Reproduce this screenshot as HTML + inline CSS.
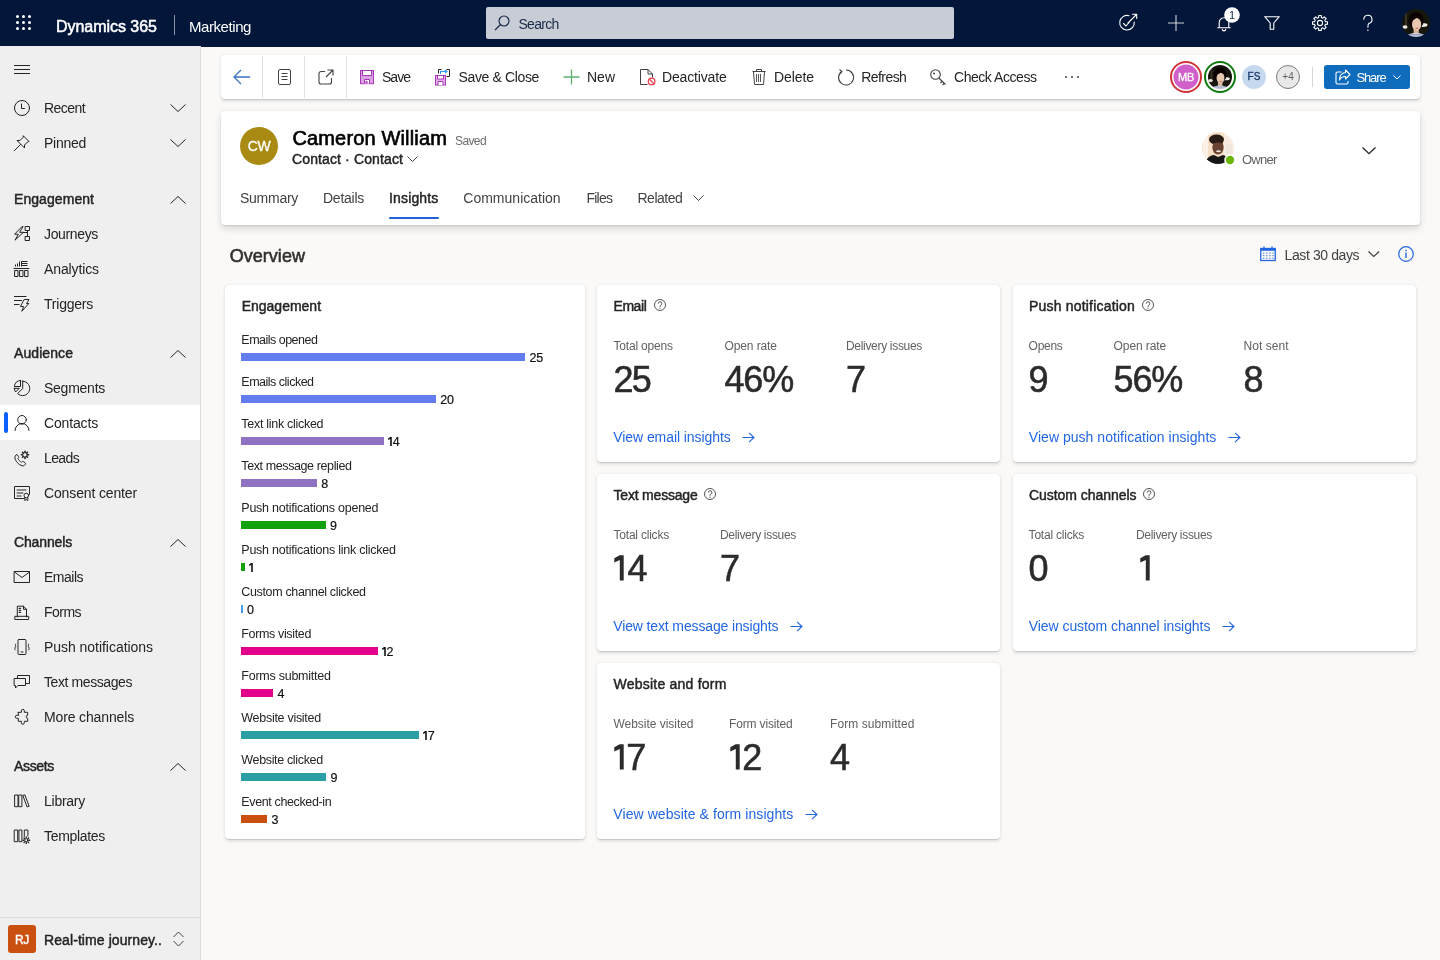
<!DOCTYPE html><html><head><meta charset="utf-8"><title>Dynamics 365 Marketing</title><style>
html,body{margin:0;padding:0;}
body{width:1440px;height:960px;overflow:hidden;position:relative;background:#FAF9F8;font-family:"Liberation Sans",sans-serif;}
.a{position:absolute;}
.t{position:absolute;white-space:nowrap;}
svg.a{overflow:visible;}
.card{position:absolute;background:#fff;border-radius:4px;box-shadow:0 1.6px 3.6px rgba(0,0,0,.13),0 0.3px 0.9px rgba(0,0,0,.11);}
</style></head><body><div style="position:absolute;left:0;top:0;width:1440px;height:960px;will-change:transform;">

<div class="a" style="left:0px;top:0px;width:1440px;height:46.6px;background:#011638;"></div>
<svg class="a" style="left:0px;top:0px;" width="40" height="40" viewBox="0 0 40 40"><circle cx="17.5" cy="16.5" r="1.5" fill="#fff"/><circle cx="17.5" cy="22.5" r="1.5" fill="#fff"/><circle cx="17.5" cy="28.5" r="1.5" fill="#fff"/><circle cx="23.5" cy="16.5" r="1.5" fill="#fff"/><circle cx="23.5" cy="22.5" r="1.5" fill="#fff"/><circle cx="23.5" cy="28.5" r="1.5" fill="#fff"/><circle cx="29.5" cy="16.5" r="1.5" fill="#fff"/><circle cx="29.5" cy="22.5" r="1.5" fill="#fff"/><circle cx="29.5" cy="28.5" r="1.5" fill="#fff"/></svg>
<div class="t" style="left:56.00px;top:15.71px;font-size:16px;line-height:21px;color:#fff;-webkit-text-stroke:0.51px #fff;letter-spacing:-0.036px;">Dynamics 365</div>
<div class="a" style="left:174px;top:15px;width:1px;height:20px;background:#8a93a6;"></div>
<div class="t" style="left:189.00px;top:16.54px;font-size:15px;line-height:20px;color:#fff;letter-spacing:-0.431px;">Marketing</div>
<div class="a" style="left:486px;top:7px;width:468px;height:32px;background:#C8CDD5;border-radius:2px;"></div>
<svg class="a" style="left:494px;top:15px;" width="16" height="16" viewBox="0 0 16 16"><circle cx="10" cy="6" r="5" fill="none" stroke="#1b2a4a" stroke-width="1.2"/><line x1="6.5" y1="9.5" x2="1" y2="15" stroke="#1b2a4a" stroke-width="1.2"/></svg>
<div class="t" style="left:518.50px;top:15.17px;font-size:14px;line-height:18px;color:#1b2a4a;letter-spacing:-0.724px;">Search</div>
<svg class="a" style="left:1118px;top:13px;" width="20" height="20" viewBox="0 0 20 20"><path d="M16.3 9A7.3 7.3 0 1 1 11 2.7" stroke="#fff" stroke-width="1.1" fill="none" stroke-linecap="round" stroke-linejoin="round"/><path d="M10 10L18.5 1.5M14.5 1.3H18.7V5.5" stroke="#fff" stroke-width="1.1" fill="none" stroke-linecap="round" stroke-linejoin="round"/><path d="M5.5 10.5L8 13L11 9.5" stroke="#fff" stroke-width="1.1" fill="none" stroke-linecap="round" stroke-linejoin="round"/></svg>
<svg class="a" style="left:1168px;top:15px;" width="16" height="16" viewBox="0 0 16 16"><path d="M8 0V16M0 8H16" stroke="#cfd3da" stroke-width="1.1"/></svg>
<svg class="a" style="left:1217px;top:15px;" width="14" height="16" viewBox="0 0 14 16"><path d="M2.2 12.8V7.5A4.8 4.8 0 0 1 11.8 7.5V12.8H13.3H0.7Z" stroke="#fff" stroke-width="1.1" fill="none" stroke-linecap="round" stroke-linejoin="round"/><path d="M5.3 14.2A1.7 1.7 0 0 0 8.7 14.2" stroke="#fff" stroke-width="1.1" fill="none" stroke-linecap="round" stroke-linejoin="round"/></svg>
<svg class="a" style="left:1224px;top:7px;" width="16" height="16" viewBox="0 0 16 16"><circle cx="8" cy="8" r="7.8" fill="#fff"/></svg>
<div class="t" style="left:1224.00px;top:7.86px;font-size:11px;line-height:14px;color:#0b1f44;width:16px;text-align:center;">1</div>
<svg class="a" style="left:1264px;top:16px;" width="16" height="14" viewBox="0 0 16 14"><path d="M0.7 0.7H15.3L9.8 7V13.3H6.2V7Z" stroke="#fff" stroke-width="1.1" fill="none" stroke-linecap="round" stroke-linejoin="round"/></svg>
<svg class="a" style="left:1312px;top:15px;" width="16" height="16" viewBox="0 0 16 16"><path d="M13.44 6.67 L15.49 6.71 L15.49 9.29 L13.44 9.33 L12.79 10.91 L14.21 12.39 L12.39 14.21 L10.91 12.79 L9.33 13.44 L9.29 15.49 L6.71 15.49 L6.67 13.44 L5.09 12.79 L3.61 14.21 L1.79 12.39 L3.21 10.91 L2.56 9.33 L0.51 9.29 L0.51 6.71 L2.56 6.67 L3.21 5.09 L1.79 3.61 L3.61 1.79 L5.09 3.21 L6.67 2.56 L6.71 0.51 L9.29 0.51 L9.33 2.56 L10.91 3.21 L12.39 1.79 L14.21 3.61 L12.79 5.09Z" stroke="#fff" stroke-width="1.1" fill="none" stroke-linecap="round" stroke-linejoin="round"/><circle cx="8" cy="8" r="2.6" stroke="#fff" stroke-width="1.1" fill="none" stroke-linecap="round" stroke-linejoin="round"/></svg>
<svg class="a" style="left:1363px;top:15px;" width="10" height="17" viewBox="0 0 10 17"><path d="M0.8 4.3A4.1 4.1 0 1 1 5.8 8.4C5.1 9 4.9 9.8 4.9 12.3" stroke="#fff" stroke-width="1.1" fill="none" stroke-linecap="round" stroke-linejoin="round"/><circle cx="4.9" cy="15.3" r=".75" fill="#fff"/></svg>
<svg class="a" style="left:1402px;top:9px;" width="28" height="28" viewBox="0 0 28 28"><defs><clipPath id="cp0"><circle cx="14" cy="14" r="14"/></clipPath><filter id="bl" x="-10%" y="-10%" width="120%" height="120%"><feGaussianBlur stdDeviation="0.35"/></filter></defs><g clip-path="url(#cp0)"><g filter="url(#bl)"><rect width="28" height="28" fill="#16120e"/><rect x="3" y="4" width="2" height="16" fill="#3a3328"/><ellipse cx="3" cy="18" rx="2.6" ry="1.8" fill="#e9e5dd"/><ellipse cx="20.5" cy="16" rx="5" ry="1.9" fill="#f1eee8"/><ellipse cx="14.2" cy="11.5" rx="7.6" ry="8.6" fill="#080605"/><rect x="11.6" y="19" width="5.2" height="6" fill="#d9b297"/><ellipse cx="14.6" cy="15.3" rx="4.6" ry="6.2" fill="#e8c7b0"/><path d="M8.5 12C9 7 12 5 16 5.5C19 6 21 8.5 20.5 12C19 9.5 16 8.5 13.5 9.5C12 10.5 10.5 11.5 8.5 12Z" fill="#080605"/><ellipse cx="14.8" cy="19.2" rx="1.7" ry=".7" fill="#c27868"/><ellipse cx="14" cy="28.5" rx="10" ry="4.5" fill="#d8dbe3"/><path d="M6 25.5H22M7 27H21" stroke="#6b7fb0" stroke-width=".6"/></g></g></svg>
<div class="a" style="left:0px;top:46px;width:200px;height:914px;background:#EFEFEF;"></div>
<div class="a" style="left:200px;top:46px;width:1px;height:914px;background:#DCDCDC;"></div>
<svg class="a" style="left:14px;top:60px;" width="16" height="16" viewBox="0 0 16 16"><path d="M0 5.5H16M0 9.5H16M0 13.5H16" stroke="#242424" stroke-width="1"/></svg>
<svg class="a" style="left:14px;top:100px;" width="16" height="16" viewBox="0 0 16 16"><circle cx="8" cy="8" r="7.5" stroke="#242424" stroke-width="1" fill="none" stroke-linecap="round" stroke-linejoin="round"/><path d="M7.5 4V8.5H10.5" stroke="#242424" stroke-width="1" fill="none" stroke-linecap="round" stroke-linejoin="round"/></svg>
<div class="t" style="left:44.00px;top:99.07px;font-size:14px;line-height:18px;color:#242424;letter-spacing:-0.557px;">Recent</div>
<svg class="a" style="left:170px;top:104px;" width="16" height="8" viewBox="0 0 16 8"><path d="M0.5 0.5L8.0 7.5L15.5 0.5" stroke="#242424" stroke-width="1" fill="none"/></svg>
<svg class="a" style="left:14px;top:135px;" width="16" height="16" viewBox="0 0 16 16"><path d="M9.5 1L15 6.5L13.5 7L10.5 10L10.5 13L3 5.5L6 5.5L9 2.5Z" stroke="#242424" stroke-width="1" fill="none" stroke-linecap="round" stroke-linejoin="round"/><path d="M6.5 9.5L0.5 15.5" stroke="#242424" stroke-width="1" fill="none" stroke-linecap="round" stroke-linejoin="round"/></svg>
<div class="t" style="left:44.00px;top:134.07px;font-size:14px;line-height:18px;color:#242424;letter-spacing:-0.263px;">Pinned</div>
<svg class="a" style="left:170px;top:139px;" width="16" height="8" viewBox="0 0 16 8"><path d="M0.5 0.5L8.0 7.5L15.5 0.5" stroke="#242424" stroke-width="1" fill="none"/></svg>
<div class="t" style="left:14.00px;top:190.17px;font-size:14px;line-height:18px;color:#242424;-webkit-text-stroke:0.45px #242424;letter-spacing:0.064px;">Engagement</div>
<svg class="a" style="left:170px;top:195.5px;" width="16" height="8" viewBox="0 0 16 8"><path d="M0.5 7.5L8.0 0.5L15.5 7.5" stroke="#242424" stroke-width="1" fill="none"/></svg>
<svg class="a" style="left:14px;top:226px;" width="16" height="16" viewBox="0 0 16 16"><path d="M7.8 0.8L0.6 8.2H4.3L1 14.2L9.4 6.3H5.6L8.9 0.8Z" stroke="#242424" stroke-width="1" fill="none" stroke-linecap="round" stroke-linejoin="round"/><rect x="11.5" y="0.5" width="4" height="4" stroke="#242424" stroke-width="1" fill="none" stroke-linecap="round" stroke-linejoin="round"/><rect x="11.5" y="10.5" width="4" height="4" stroke="#242424" stroke-width="1" fill="none" stroke-linecap="round" stroke-linejoin="round"/><path d="M13.5 4.5V10.5M9.5 6.5H13.5" stroke="#242424" stroke-width="1" fill="none" stroke-linecap="round" stroke-linejoin="round"/></svg>
<div class="t" style="left:44.00px;top:225.07px;font-size:14px;line-height:18px;color:#242424;letter-spacing:-0.348px;">Journeys</div>
<svg class="a" style="left:14px;top:261px;" width="16" height="16" viewBox="0 0 16 16"><path d="M0 7.5H15" stroke="#242424" stroke-width="1" fill="none" stroke-linecap="round" stroke-linejoin="round"/><rect x="1" y="9.5" width="3" height="6" stroke="#242424" stroke-width="1" fill="none" stroke-linecap="round" stroke-linejoin="round"/><rect x="6" y="9.5" width="3" height="6" stroke="#242424" stroke-width="1" fill="none" stroke-linecap="round" stroke-linejoin="round"/><rect x="11" y="9.5" width="3" height="6" stroke="#242424" stroke-width="1" fill="none" stroke-linecap="round" stroke-linejoin="round"/><path d="M1.5 3.5V5.5M3.5 2.5V5.5M5.5 0.5V5.5M7.5 0.5V5.5M7.5 0.5H13.5M7.5 2.5H13.5M7.5 4.5H13.5" stroke="#242424" stroke-width="1" fill="none"/></svg>
<div class="t" style="left:44.00px;top:260.07px;font-size:14px;line-height:18px;color:#242424;letter-spacing:-0.113px;">Analytics</div>
<svg class="a" style="left:14px;top:296px;" width="16" height="16" viewBox="0 0 16 16"><path d="M0 0.5H12.5M0 4.5H8M0 8.5H5.5" stroke="#242424" stroke-width="1" fill="none"/><path d="M10.5 3.5H15L12.6 7.5H14.8L7.8 15.3L9.6 10.5H6.8Z" stroke="#242424" stroke-width="1" fill="none" stroke-linecap="round" stroke-linejoin="round"/></svg>
<div class="t" style="left:44.00px;top:295.07px;font-size:14px;line-height:18px;color:#242424;letter-spacing:-0.225px;">Triggers</div>
<div class="t" style="left:14.00px;top:344.17px;font-size:14px;line-height:18px;color:#242424;-webkit-text-stroke:0.45px #242424;letter-spacing:0.080px;">Audience</div>
<svg class="a" style="left:170px;top:349.5px;" width="16" height="8" viewBox="0 0 16 8"><path d="M0.5 7.5L8.0 0.5L15.5 7.5" stroke="#242424" stroke-width="1" fill="none"/></svg>
<svg class="a" style="left:14px;top:380px;" width="16" height="16" viewBox="0 0 16 16"><path d="M8.7 1.2V8.5L3.6 13.6A7.2 7.2 0 1 0 8.7 1.2Z" stroke="#242424" stroke-width="1" fill="none" stroke-linecap="round" stroke-linejoin="round"/><path d="M6.5 0.4V6.5H0.4A6.1 6.1 0 0 1 6.5 0.4Z" stroke="#242424" stroke-width="1" fill="none" stroke-linecap="round" stroke-linejoin="round"/><path d="M0.4 8.3H5.3L1.6 12A6.1 6.1 0 0 1 0.4 8.3Z" stroke="#242424" stroke-width="1" fill="none" stroke-linecap="round" stroke-linejoin="round"/></svg>
<div class="t" style="left:44.00px;top:379.07px;font-size:14px;line-height:18px;color:#242424;letter-spacing:-0.252px;">Segments</div>
<div class="a" style="left:0px;top:405px;width:200px;height:35px;background:#fff;"></div>
<div class="a" style="left:3.5px;top:412px;width:4px;height:21px;background:#0B5FFF;border-radius:2px;"></div>
<svg class="a" style="left:14px;top:415px;" width="16" height="16" viewBox="0 0 16 16"><circle cx="8" cy="4.8" r="4.3" stroke="#242424" stroke-width="1" fill="none" stroke-linecap="round" stroke-linejoin="round"/><path d="M1 15.5A7 7 0 0 1 15 15.5" stroke="#242424" stroke-width="1" fill="none" stroke-linecap="round" stroke-linejoin="round"/></svg>
<div class="t" style="left:44.00px;top:414.07px;font-size:14px;line-height:18px;color:#242424;letter-spacing:-0.154px;">Contacts</div>
<svg class="a" style="left:14px;top:450px;" width="16" height="16" viewBox="0 0 16 16"><path d="M2 5C1 6 0.5 7.5 1.3 9.5C2.7 12.5 5 14.8 8 15.8C9.5 16.2 10.5 15.5 11 14.8L11.4 14.2C11.7 13.7 11.6 13.2 11.2 12.9L9.5 11.6C9 11.3 8.5 11.4 8.2 11.8L7.7 12.3C6 11.5 4.6 10.1 3.9 8.4L4.4 7.9C4.8 7.6 4.9 7.1 4.6 6.6L3.4 4.9C3.1 4.5 2.5 4.4 2 5Z" stroke="#242424" stroke-width="1" fill="none" stroke-linecap="round" stroke-linejoin="round"/><circle cx="11" cy="4.8" r="2.3" stroke="#242424" stroke-width="1" fill="none" stroke-linecap="round" stroke-linejoin="round"/><path d="M11 1.2V2M11 7.6V8.4M7.4 4.8H8.2M13.8 4.8H14.6M8.5 2.3L9.1 2.9M12.9 6.7L13.5 7.3M13.5 2.3L12.9 2.9M9.1 6.7L8.5 7.3" stroke="#242424" stroke-width="1.6" stroke-linecap="round"/></svg>
<div class="t" style="left:44.00px;top:449.07px;font-size:14px;line-height:18px;color:#242424;letter-spacing:-0.625px;">Leads</div>
<svg class="a" style="left:14px;top:485px;" width="16" height="16" viewBox="0 0 16 16"><path d="M10 13.5H0.5V1.5H15.5V9.5" stroke="#242424" stroke-width="1" fill="none" stroke-linecap="round" stroke-linejoin="round"/><path d="M3 5H12M3 8H9M3 11H7" stroke="#242424" stroke-width="1" fill="none" stroke-linecap="round" stroke-linejoin="round"/><circle cx="12.3" cy="10.5" r="2.3" stroke="#242424" stroke-width="1" fill="none" stroke-linecap="round" stroke-linejoin="round"/><path d="M10.8 12.5V15.5L12.3 14.5L13.8 15.5V12.5" stroke="#242424" stroke-width="1" fill="none" stroke-linecap="round" stroke-linejoin="round"/></svg>
<div class="t" style="left:44.00px;top:484.07px;font-size:14px;line-height:18px;color:#242424;letter-spacing:-0.136px;">Consent center</div>
<div class="t" style="left:14.00px;top:533.17px;font-size:14px;line-height:18px;color:#242424;-webkit-text-stroke:0.45px #242424;letter-spacing:-0.141px;">Channels</div>
<svg class="a" style="left:170px;top:538.5px;" width="16" height="8" viewBox="0 0 16 8"><path d="M0.5 7.5L8.0 0.5L15.5 7.5" stroke="#242424" stroke-width="1" fill="none"/></svg>
<svg class="a" style="left:14px;top:569px;" width="16" height="16" viewBox="0 0 16 16"><rect x="0.5" y="2.5" width="15" height="11" stroke="#242424" stroke-width="1" fill="none" stroke-linecap="round" stroke-linejoin="round"/><path d="M0.5 3L8 8.5L15.5 3" stroke="#242424" stroke-width="1" fill="none" stroke-linecap="round" stroke-linejoin="round"/></svg>
<div class="t" style="left:44.00px;top:568.07px;font-size:14px;line-height:18px;color:#242424;letter-spacing:-0.500px;">Emails</div>
<svg class="a" style="left:14px;top:604px;" width="16" height="16" viewBox="0 0 16 16"><path d="M3.3 13V2.2H9.5L12.5 5.3V13" stroke="#242424" stroke-width="1" fill="none" stroke-linecap="round" stroke-linejoin="round"/><path d="M9.5 2.2V5.3H12.5" stroke="#242424" stroke-width="1" fill="none" stroke-linecap="round" stroke-linejoin="round"/><path d="M1.2 12.3H14.7V15.5H1.2Z" stroke="#242424" stroke-width="1" fill="none" stroke-linecap="round" stroke-linejoin="round"/><path d="M5.2 4.4H6.6M5.2 6.4H6.6M5.2 8.4H6.6" stroke="#242424" stroke-width="1.1" stroke-linecap="round"/></svg>
<div class="t" style="left:44.00px;top:603.07px;font-size:14px;line-height:18px;color:#242424;letter-spacing:-0.528px;">Forms</div>
<svg class="a" style="left:14px;top:639px;" width="16" height="16" viewBox="0 0 16 16"><rect x="4" y="0.5" width="8" height="15" rx="1" stroke="#242424" stroke-width="1" fill="none" stroke-linecap="round" stroke-linejoin="round"/><path d="M7 13H9" stroke="#242424" stroke-width="1" fill="none" stroke-linecap="round" stroke-linejoin="round"/><path d="M1.5 5C0.5 6 2.5 7 1.5 8S0.5 10 1.5 11M14.5 5C15.5 6 13.5 7 14.5 8S15.5 10 14.5 11" stroke="#242424" stroke-width="1" fill="none" stroke-linecap="round" stroke-linejoin="round"/></svg>
<div class="t" style="left:44.00px;top:638.07px;font-size:14px;line-height:18px;color:#242424;letter-spacing:-0.039px;">Push notifications</div>
<svg class="a" style="left:14px;top:674px;" width="16" height="16" viewBox="0 0 16 16"><path d="M0.5 4.5H11.5V11.5H4L1.5 14V11.5H0.5Z" stroke="#242424" stroke-width="1" fill="none" stroke-linecap="round" stroke-linejoin="round"/><path d="M3.5 4.5V1.5H15.5V9.5H11.5" stroke="#242424" stroke-width="1" fill="none" stroke-linecap="round" stroke-linejoin="round"/></svg>
<div class="t" style="left:44.00px;top:673.07px;font-size:14px;line-height:18px;color:#242424;letter-spacing:-0.411px;">Text messages</div>
<svg class="a" style="left:14px;top:709px;" width="16" height="16" viewBox="0 0 16 16"><path d="M4.3 3.3H7.4V1.8A1.45 1.45 0 0 1 10.3 1.8V3.3H13.7V6.3A1.5 1.5 0 0 0 13.7 9.3V12.3H10.3V13.8A1.45 1.45 0 0 1 7.4 13.8V12.3H4.3V9.3H2.8A1.5 1.5 0 0 1 2.8 6.3H4.3Z" stroke="#242424" stroke-width="1" fill="none" stroke-linecap="round" stroke-linejoin="round"/></svg>
<div class="t" style="left:44.00px;top:708.07px;font-size:14px;line-height:18px;color:#242424;letter-spacing:-0.137px;">More channels</div>
<div class="t" style="left:14.00px;top:757.17px;font-size:14px;line-height:18px;color:#242424;-webkit-text-stroke:0.45px #242424;letter-spacing:-0.336px;">Assets</div>
<svg class="a" style="left:170px;top:762.5px;" width="16" height="8" viewBox="0 0 16 8"><path d="M0.5 7.5L8.0 0.5L15.5 7.5" stroke="#242424" stroke-width="1" fill="none"/></svg>
<svg class="a" style="left:14px;top:793px;" width="16" height="16" viewBox="0 0 16 16"><rect x="1" y="2" width="3" height="11.7" stroke="#242424" stroke-width="1" fill="none" stroke-linecap="round" stroke-linejoin="round"/><rect x="5.1" y="2" width="2.8" height="11.7" stroke="#242424" stroke-width="1" fill="none" stroke-linecap="round" stroke-linejoin="round"/><path d="M9.2 2.3L10.9 1.9L15.1 13.3L13.4 13.8Z" stroke="#242424" stroke-width="1" fill="none" stroke-linecap="round" stroke-linejoin="round"/></svg>
<div class="t" style="left:44.00px;top:792.07px;font-size:14px;line-height:18px;color:#242424;letter-spacing:-0.252px;">Library</div>
<svg class="a" style="left:14px;top:828px;" width="16" height="16" viewBox="0 0 16 16"><rect x="0.6" y="2" width="3.1" height="11.7" stroke="#242424" stroke-width="1" fill="none" stroke-linecap="round" stroke-linejoin="round"/><rect x="5.3" y="2" width="2.6" height="11.7" stroke="#242424" stroke-width="1" fill="none" stroke-linecap="round" stroke-linejoin="round"/><path d="M10.3 8.5V2H13.9V8" stroke="#242424" stroke-width="1" fill="none" stroke-linecap="round" stroke-linejoin="round"/><circle cx="12.3" cy="12.2" r="1.6" stroke="#242424" stroke-width="1" fill="none" stroke-linecap="round" stroke-linejoin="round"/><path d="M12.3 8.9V9.6M12.3 14.8V15.5M9 12.2H9.7M14.9 12.2H15.6M10 9.9L10.5 10.4M14.1 14L14.6 14.5M14.6 9.9L14.1 10.4M10.5 14L10 14.5" stroke="#242424" stroke-width="1.4" stroke-linecap="round"/></svg>
<div class="t" style="left:44.00px;top:827.07px;font-size:14px;line-height:18px;color:#242424;letter-spacing:-0.309px;">Templates</div>
<div class="a" style="left:0px;top:917px;width:200px;height:1px;background:#DCDCDC;"></div>
<div class="a" style="left:8px;top:925px;width:28px;height:28px;background:#CA5010;border-radius:3px;"></div>
<div class="t" style="left:8.00px;top:931.73px;font-size:12px;line-height:16px;color:#fff;-webkit-text-stroke:0.39px #fff;width:28px;text-align:center;letter-spacing:-0.3px;">RJ</div>
<div class="t" style="left:44.00px;top:930.67px;font-size:14px;line-height:18px;color:#242424;-webkit-text-stroke:0.45px #242424;letter-spacing:0.084px;">Real-time journey..</div>
<svg class="a" style="left:173px;top:931px;" width="11" height="16" viewBox="0 0 11 16"><path d="M0.5 6L5.5 1L10.5 6M0.5 10L5.5 15L10.5 10" stroke="#424242" stroke-width="1" fill="none"/></svg>
<div class="card" style="left:221px;top:55px;width:1199px;height:44px;"></div>
<svg class="a" style="left:233px;top:69px;" width="18" height="16" viewBox="0 0 18 16"><path d="M8 1L1 8L8 15M1 8H17" stroke="#3A76C4" stroke-width="1.3" fill="none" stroke-linejoin="round"/></svg>
<div class="a" style="left:262px;top:56px;width:1px;height:42px;background:#E1E1E1;"></div>
<div class="a" style="left:304px;top:56px;width:1px;height:42px;background:#E1E1E1;"></div>
<div class="a" style="left:346px;top:56px;width:1px;height:42px;background:#E1E1E1;"></div>
<svg class="a" style="left:278px;top:69px;" width="13" height="16" viewBox="0 0 13 16"><rect x="0.5" y="0.5" width="12" height="15" rx="1.5" stroke="#424242" stroke-width="1" fill="none"/><path d="M3.5 4.5H9.5M3.5 7.5H9.5M3.5 10.5H9.5" stroke="#424242" stroke-width="1"/></svg>
<svg class="a" style="left:318px;top:69px;" width="16" height="16" viewBox="0 0 16 16"><path d="M7 2.5H3A2 2 0 0 0 1 4.5V13A2 2 0 0 0 3 15H11.5A2 2 0 0 0 13.5 13V9M9.5 1H15V6.5M15 1L8 8" stroke="#424242" stroke-width="1.1" fill="none"/></svg>
<svg class="a" style="left:360px;top:70px;" width="14" height="14" viewBox="0 0 14 14"><rect x="0.5" y="0.5" width="13" height="13.2" fill="#D9A3E1" stroke="#A838B8" stroke-width="1"/><rect x="2.5" y="0.5" width="9" height="5" fill="#fff" stroke="#A838B8" stroke-width="1"/><path d="M4.5 13.5V9.5H9.5V13.5" fill="#fff" stroke="#A838B8" stroke-width="1"/><rect x="5.5" y="11" width="2" height="2.5" fill="#A838B8"/></svg>
<div class="t" style="left:382.00px;top:67.97px;font-size:14px;line-height:18px;color:#242424;letter-spacing:-0.977px;">Save</div>
<svg class="a" style="left:435px;top:69px;" width="16" height="17" viewBox="0 0 16 17"><rect x="0.5" y="6.5" width="10" height="9.5" fill="#E2B5E8" stroke="#A838B8" stroke-width="1"/><rect x="2.5" y="6.5" width="6" height="3.5" fill="#fff" stroke="#A838B8" stroke-width="1"/><path d="M3 16V12.5H8V16" fill="#fff" stroke="#A838B8" stroke-width="1"/><path d="M3.5 4.5V0.5H6.5M11.5 0.5H14.5V7.5H11.5" stroke="#242424" stroke-width="1" fill="none"/><path d="M5.5 5V2.5H12M10 0.8L12 2.5L10 4.2" stroke="#2899F5" stroke-width="1.1" fill="none"/></svg>
<div class="t" style="left:458.50px;top:67.97px;font-size:14px;line-height:18px;color:#242424;letter-spacing:-0.359px;">Save &amp; Close</div>
<svg class="a" style="left:563px;top:69px;" width="17" height="16" viewBox="0 0 17 16"><path d="M8.5 0.5V15.5M0.5 8H16.5" stroke="#5FAF6F" stroke-width="1.3"/></svg>
<div class="t" style="left:587.00px;top:67.97px;font-size:14px;line-height:18px;color:#242424;">New</div>
<svg class="a" style="left:639px;top:69px;" width="17" height="17" viewBox="0 0 17 17"><path d="M8.5 15.5H1.5V0.5H9L13.5 5V8.5" stroke="#424242" stroke-width="1" fill="none"/><path d="M9 0.5V5H13.5" stroke="#424242" stroke-width="1" fill="none"/><circle cx="12.6" cy="12.4" r="3.3" stroke="#E8404A" stroke-width="1.3" fill="#fff"/><path d="M10.4 10.2L14.8 14.6" stroke="#E8404A" stroke-width="1.3"/></svg>
<div class="t" style="left:662.00px;top:67.97px;font-size:14px;line-height:18px;color:#242424;letter-spacing:-0.163px;">Deactivate</div>
<svg class="a" style="left:752px;top:69px;" width="14" height="16" viewBox="0 0 14 16"><path d="M0.5 2.5H13.5M4.5 2.5V0.5H9.5V2.5M1.5 2.5L2.5 15.5H11.5L12.5 2.5" stroke="#424242" stroke-width="1" fill="none"/><path d="M4.5 5V13M6.5 5V13M8.5 5V13" stroke="#424242" stroke-width="0.9"/></svg>
<div class="t" style="left:774.00px;top:67.97px;font-size:14px;line-height:18px;color:#242424;letter-spacing:-0.076px;">Delete</div>
<svg class="a" style="left:837px;top:69px;" width="18" height="17" viewBox="0 0 18 17"><path d="M5 2.2A7.5 7.5 0 1 0 9 1M2.5 0.5L5 2.5L3 5" stroke="#424242" stroke-width="1.1" fill="none"/></svg>
<div class="t" style="left:861.30px;top:67.97px;font-size:14px;line-height:18px;color:#242424;letter-spacing:-0.571px;">Refresh</div>
<svg class="a" style="left:930px;top:69px;" width="17" height="17" viewBox="0 0 17 17"><circle cx="5.5" cy="5.5" r="4.8" stroke="#424242" stroke-width="1.1" fill="none"/><path d="M8.8 9L15.5 15.5M12 12.5L10.5 14M14 14.5L12.5 16" stroke="#424242" stroke-width="1.1" fill="none"/><circle cx="4" cy="4.5" r="1" fill="#424242"/></svg>
<div class="t" style="left:954.00px;top:67.97px;font-size:14px;line-height:18px;color:#242424;letter-spacing:-0.452px;">Check Access</div>
<div class="a" style="left:1064.5px;top:76px;width:2px;height:2px;background:#424242;border-radius:1px;"></div>
<div class="a" style="left:1070.7px;top:76px;width:2px;height:2px;background:#424242;border-radius:1px;"></div>
<div class="a" style="left:1076.9px;top:76px;width:2px;height:2px;background:#424242;border-radius:1px;"></div>
<svg class="a" style="left:1170px;top:61px;" width="32" height="32" viewBox="0 0 32 32"><circle cx="16" cy="16" r="15" fill="#fff" stroke="#D13438" stroke-width="2"/><circle cx="16" cy="16" r="12.5" fill="#D15FC9"/></svg>
<div class="t" style="left:1170.00px;top:69.86px;font-size:11px;line-height:14px;color:#fff;-webkit-text-stroke:0.30px #fff;width:32px;text-align:center;letter-spacing:-0.2px;">MB</div>
<svg class="a" style="left:1204px;top:61px;" width="32" height="32" viewBox="0 0 32 32"><defs><clipPath id="cp1"><circle cx="16" cy="16" r="12"/></clipPath></defs><circle cx="16" cy="16" r="15" fill="#fff" stroke="#107C10" stroke-width="2"/><g clip-path="url(#cp1)"><g transform="translate(4 4) scale(0.857)" filter="url(#bl)"><rect width="28" height="28" fill="#16120e"/><rect x="3" y="4" width="2" height="16" fill="#3a3328"/><ellipse cx="3" cy="18" rx="2.6" ry="1.8" fill="#e9e5dd"/><ellipse cx="20.5" cy="16" rx="5" ry="1.9" fill="#f1eee8"/><ellipse cx="14.2" cy="11.5" rx="7.6" ry="8.6" fill="#080605"/><rect x="11.6" y="19" width="5.2" height="6" fill="#d9b297"/><ellipse cx="14.6" cy="15.3" rx="4.6" ry="6.2" fill="#e8c7b0"/><path d="M8.5 12C9 7 12 5 16 5.5C19 6 21 8.5 20.5 12C19 9.5 16 8.5 13.5 9.5C12 10.5 10.5 11.5 8.5 12Z" fill="#080605"/><ellipse cx="14.8" cy="19.2" rx="1.7" ry=".7" fill="#c27868"/><ellipse cx="14" cy="28.5" rx="10" ry="4.5" fill="#d8dbe3"/><path d="M6 25.5H22M7 27H21" stroke="#6b7fb0" stroke-width=".6"/></g></g></svg>
<svg class="a" style="left:1242px;top:65px;" width="24" height="24" viewBox="0 0 24 24"><circle cx="12" cy="12" r="12" fill="#C7D9EE"/></svg>
<div class="t" style="left:1242.00px;top:69.99px;font-size:10px;line-height:13px;color:#1B3A6B;-webkit-text-stroke:0.32px #1B3A6B;width:24px;text-align:center;">FS</div>
<svg class="a" style="left:1276px;top:65px;" width="24" height="24" viewBox="0 0 24 24"><circle cx="12" cy="12" r="11.5" fill="#E8E8E8" stroke="#7A7A7A" stroke-width="1"/></svg>
<div class="t" style="left:1276.00px;top:70.19px;font-size:10px;line-height:13px;color:#616161;width:24px;text-align:center;">+4</div>
<div class="a" style="left:1311.5px;top:67px;width:1px;height:20px;background:#D6D6D6;"></div>
<div class="a" style="left:1324px;top:65px;width:86px;height:24px;background:#0F6CBD;border-radius:3px;"></div>
<svg class="a" style="left:1335px;top:69px;" width="16" height="16" viewBox="0 0 16 16"><path d="M6.5 3H2.5A1.5 1.5 0 0 0 1 4.5V13.5A1.5 1.5 0 0 0 2.5 15H11.5A1.5 1.5 0 0 0 13 13.5V12" stroke="#fff" stroke-width="1.1" fill="none"/><path d="M10.5 1L15 5.5L10.5 10V7.5C7.5 7.5 5.5 9 4.5 11C4.5 7 6.5 4 10.5 3.5Z" stroke="#fff" stroke-width="1.1" fill="none" stroke-linejoin="round"/></svg>
<div class="t" style="left:1356.50px;top:68.80px;font-size:13px;line-height:17px;color:#fff;letter-spacing:-1.141px;">Share</div>
<svg class="a" style="left:1392.5px;top:75px;" width="8" height="4.5" viewBox="0 0 8 4.5"><path d="M0.5 0.5L4.0 4.0L7.5 0.5" stroke="#fff" stroke-width="1" fill="none"/></svg>
<div class="card" style="left:221px;top:111px;width:1199px;height:113.6px;box-shadow:0 3.2px 7.2px rgba(0,0,0,.13),0 .6px 1.8px rgba(0,0,0,.11);"></div>
<svg class="a" style="left:240px;top:127px;" width="38" height="38" viewBox="0 0 38 38"><circle cx="19" cy="19" r="19" fill="#A98A12"/></svg>
<div class="t" style="left:240.00px;top:137.17px;font-size:14px;line-height:18px;color:#fff;-webkit-text-stroke:0.30px #fff;width:38px;text-align:center;letter-spacing:-0.3px;">CW</div>
<div class="t" style="left:292.40px;top:124.99px;font-size:20px;line-height:26px;color:#000;-webkit-text-stroke:0.64px #000;letter-spacing:0.159px;">Cameron William</div>
<div class="t" style="left:455.00px;top:132.73px;font-size:12px;line-height:16px;color:#6b6b6b;letter-spacing:-0.603px;">Saved</div>
<div class="t" style="left:292.00px;top:149.97px;font-size:14px;line-height:18px;color:#242424;-webkit-text-stroke:0.45px #242424;letter-spacing:0.123px;">Contact · Contact</div>
<svg class="a" style="left:407px;top:155.5px;" width="11" height="6" viewBox="0 0 11 6"><path d="M0.5 0.5L5.5 5.5L10.5 0.5" stroke="#424242" stroke-width="1" fill="none"/></svg>
<div class="t" style="left:240.00px;top:188.77px;font-size:14px;line-height:18px;color:#424242;letter-spacing:-0.268px;">Summary</div>
<div class="t" style="left:323.00px;top:188.77px;font-size:14px;line-height:18px;color:#424242;letter-spacing:-0.254px;">Details</div>
<div class="t" style="left:389.00px;top:188.77px;font-size:14px;line-height:18px;color:#242424;-webkit-text-stroke:0.45px #242424;letter-spacing:0.158px;">Insights</div>
<div class="t" style="left:463.30px;top:188.77px;font-size:14px;line-height:18px;color:#424242;letter-spacing:0.006px;">Communication</div>
<div class="t" style="left:586.50px;top:188.77px;font-size:14px;line-height:18px;color:#424242;letter-spacing:-0.769px;">Files</div>
<div class="t" style="left:637.50px;top:188.77px;font-size:14px;line-height:18px;color:#424242;letter-spacing:-0.505px;">Related</div>
<svg class="a" style="left:692.5px;top:194.6px;" width="11" height="6" viewBox="0 0 11 6"><path d="M0.5 0.5L5.5 5.5L10.5 0.5" stroke="#424242" stroke-width="1" fill="none"/></svg>
<div class="a" style="left:389px;top:216.8px;width:50px;height:2.5px;background:#1F5FD8;border-radius:1px;"></div>
<svg class="a" style="left:1202px;top:132px;" width="32" height="32" viewBox="0 0 32 32"><defs><clipPath id="cp2"><circle cx="16" cy="16" r="16"/></clipPath></defs><g clip-path="url(#cp2)"><g filter="url(#bl)"><rect width="32" height="32" fill="#f5dfc6"/><rect x="22" y="0" width="10" height="32" fill="#f8ece0"/><rect x="24" y="12" width="6" height="12" fill="#efe6dc"/><rect x="1" y="5" width="5" height="22" fill="#fbf1e6"/><ellipse cx="14.5" cy="7.5" rx="7.5" ry="5" fill="#2a1c14"/><ellipse cx="16" cy="15.5" rx="5.6" ry="7" fill="#6a4331"/><path d="M10 12C10.5 8 13 7 16 7.2C19 7.5 21 9 21 12C19 10 13 10 10 12Z" fill="#2a1c14"/><ellipse cx="16.5" cy="19.3" rx="2.4" ry="1" fill="#efe6de"/><path d="M3 32C4 26 8 23.5 12 23L16 25L21 23C25 24 28 27 29 32Z" fill="#161515"/></g></g></svg>
<svg class="a" style="left:1224px;top:154px;" width="12" height="12" viewBox="0 0 12 12"><circle cx="6" cy="6" r="5" fill="#6BB700" stroke="#fff" stroke-width="1.6"/></svg>
<div class="t" style="left:1242.00px;top:150.90px;font-size:13px;line-height:17px;color:#616161;letter-spacing:-0.739px;">Owner</div>
<svg class="a" style="left:1362px;top:146.5px;" width="14" height="7.2" viewBox="0 0 14 7.2"><path d="M0.5 0.5L7.0 6.7L13.5 0.5" stroke="#242424" stroke-width="1.3" fill="none"/></svg>
<div class="t" style="left:229.70px;top:244.75px;font-size:18px;line-height:23px;color:#323130;-webkit-text-stroke:0.58px #323130;letter-spacing:0.034px;">Overview</div>
<svg class="a" style="left:1260px;top:246px;" width="16" height="15" viewBox="0 0 16 15"><rect x="0.75" y="2.5" width="14.5" height="12" fill="none" stroke="#2266E3" stroke-width="1.3"/><rect x="0.75" y="2.5" width="14.5" height="2.3" fill="#2266E3"/><path d="M4 0.5V3M12 0.5V3" stroke="#2266E3" stroke-width="1.3"/><rect x="3.2" y="6.5" width="1.1" height="1.1" fill="#2266E3"/><rect x="3.2" y="9.1" width="1.1" height="1.1" fill="#2266E3"/><rect x="3.2" y="11.7" width="1.1" height="1.1" fill="#2266E3"/><rect x="6.3" y="6.5" width="1.1" height="1.1" fill="#2266E3"/><rect x="6.3" y="9.1" width="1.1" height="1.1" fill="#2266E3"/><rect x="6.3" y="11.7" width="1.1" height="1.1" fill="#2266E3"/><rect x="9.4" y="6.5" width="1.1" height="1.1" fill="#2266E3"/><rect x="9.4" y="9.1" width="1.1" height="1.1" fill="#2266E3"/><rect x="9.4" y="11.7" width="1.1" height="1.1" fill="#2266E3"/><rect x="12.5" y="6.5" width="1.1" height="1.1" fill="#2266E3"/><rect x="12.5" y="9.1" width="1.1" height="1.1" fill="#2266E3"/><rect x="12.5" y="11.7" width="1.1" height="1.1" fill="#2266E3"/></svg>
<div class="t" style="left:1284.50px;top:245.97px;font-size:14px;line-height:18px;color:#424242;letter-spacing:-0.388px;">Last 30 days</div>
<svg class="a" style="left:1368.4px;top:251px;" width="11.6" height="6" viewBox="0 0 11.6 6"><path d="M0.5 0.5L5.8 5.5L11.1 0.5" stroke="#424242" stroke-width="1.2" fill="none"/></svg>
<svg class="a" style="left:1398px;top:246px;" width="16" height="16" viewBox="0 0 16 16"><circle cx="8" cy="8" r="7.3" fill="none" stroke="#2266E3" stroke-width="1.2"/><rect x="7.3" y="6.5" width="1.4" height="5.5" fill="#2266E3"/><circle cx="8" cy="4.6" r=".8" fill="#2266E3"/></svg>
<div class="card" style="left:225px;top:285px;width:360px;height:554.4px;"></div>
<div class="card" style="left:597px;top:285px;width:403px;height:176.8px;"></div>
<div class="card" style="left:1012.5px;top:285px;width:403.5px;height:176.8px;"></div>
<div class="card" style="left:597px;top:473.8px;width:403px;height:176.8px;"></div>
<div class="card" style="left:1012.5px;top:473.8px;width:403.5px;height:176.8px;"></div>
<div class="card" style="left:597px;top:662.6px;width:403px;height:176.8px;"></div>
<div class="t" style="left:241.70px;top:297.17px;font-size:14px;line-height:18px;color:#242424;-webkit-text-stroke:0.45px #242424;letter-spacing:-0.006px;">Engagement</div>
<div class="t" style="left:241.30px;top:331.82px;font-size:12.5px;line-height:16px;color:#242424;letter-spacing:-0.508px;">Emails opened</div>
<div class="a" style="left:241.1px;top:353.1px;width:283.8px;height:7.8px;background:#637CEF;"></div>
<div class="t" style="left:529.40px;top:349.72px;font-size:12.5px;line-height:16px;color:#111;-webkit-text-stroke:0.20px #111;letter-spacing:-0.2px;">25</div>
<div class="t" style="left:241.30px;top:373.82px;font-size:12.5px;line-height:16px;color:#242424;letter-spacing:-0.493px;">Emails clicked</div>
<div class="a" style="left:241.1px;top:395.1px;width:194.6px;height:7.8px;background:#637CEF;"></div>
<div class="t" style="left:440.20px;top:391.72px;font-size:12.5px;line-height:16px;color:#111;-webkit-text-stroke:0.20px #111;letter-spacing:-0.2px;">20</div>
<div class="t" style="left:241.30px;top:415.82px;font-size:12.5px;line-height:16px;color:#242424;letter-spacing:-0.285px;">Text link clicked</div>
<div class="a" style="left:241.1px;top:437.1px;width:142.7px;height:7.8px;background:#8F72C1;"></div>
<svg class="a" style="left:388.0px;top:436.90000000000003px;" width="4" height="9" viewBox="0 0 4 9"><path d="M2.1 0.1H3.8V9.1H2.2V2.1L0.1 3.1V1.5Z" fill="#111"/></svg>
<div class="t" style="left:392.85px;top:433.72px;font-size:12.5px;line-height:16px;color:#111;-webkit-text-stroke:0.20px #111;">4</div>
<div class="t" style="left:241.30px;top:457.82px;font-size:12.5px;line-height:16px;color:#242424;letter-spacing:-0.395px;">Text message replied</div>
<div class="a" style="left:241.1px;top:479.1px;width:75.7px;height:7.8px;background:#8F72C1;"></div>
<div class="t" style="left:321.30px;top:475.72px;font-size:12.5px;line-height:16px;color:#111;-webkit-text-stroke:0.20px #111;letter-spacing:-0.2px;">8</div>
<div class="t" style="left:241.30px;top:499.82px;font-size:12.5px;line-height:16px;color:#242424;letter-spacing:-0.247px;">Push notifications opened</div>
<div class="a" style="left:241.1px;top:521.1px;width:84.5px;height:7.8px;background:#13A10E;"></div>
<div class="t" style="left:330.10px;top:517.72px;font-size:12.5px;line-height:16px;color:#111;-webkit-text-stroke:0.20px #111;letter-spacing:-0.2px;">9</div>
<div class="t" style="left:241.30px;top:541.82px;font-size:12.5px;line-height:16px;color:#242424;letter-spacing:-0.239px;">Push notifications link clicked</div>
<div class="a" style="left:241.1px;top:563.1px;width:3.9px;height:7.8px;background:#13A10E;"></div>
<svg class="a" style="left:249.2px;top:562.9px;" width="4" height="9" viewBox="0 0 4 9"><path d="M2.1 0.1H3.8V9.1H2.2V2.1L0.1 3.1V1.5Z" fill="#111"/></svg>
<div class="t" style="left:241.30px;top:583.82px;font-size:12.5px;line-height:16px;color:#242424;letter-spacing:-0.351px;">Custom channel clicked</div>
<div class="a" style="left:241.1px;top:605.1px;width:1.5px;height:7.8px;background:#4A9BE0;"></div>
<div class="t" style="left:247.00px;top:601.72px;font-size:12.5px;line-height:16px;color:#111;-webkit-text-stroke:0.20px #111;letter-spacing:-0.2px;">0</div>
<div class="t" style="left:241.30px;top:625.82px;font-size:12.5px;line-height:16px;color:#242424;letter-spacing:-0.355px;">Forms visited</div>
<div class="a" style="left:241.1px;top:647.1px;width:136.7px;height:7.8px;background:#E3008C;"></div>
<svg class="a" style="left:382.0px;top:646.9px;" width="4" height="9" viewBox="0 0 4 9"><path d="M2.1 0.1H3.8V9.1H2.2V2.1L0.1 3.1V1.5Z" fill="#111"/></svg>
<div class="t" style="left:386.60px;top:643.72px;font-size:12.5px;line-height:16px;color:#111;-webkit-text-stroke:0.20px #111;">2</div>
<div class="t" style="left:241.30px;top:667.82px;font-size:12.5px;line-height:16px;color:#242424;letter-spacing:-0.251px;">Forms submitted</div>
<div class="a" style="left:241.1px;top:689.1px;width:31.9px;height:7.8px;background:#E3008C;"></div>
<div class="t" style="left:277.50px;top:685.72px;font-size:12.5px;line-height:16px;color:#111;-webkit-text-stroke:0.20px #111;letter-spacing:-0.2px;">4</div>
<div class="t" style="left:241.30px;top:709.82px;font-size:12.5px;line-height:16px;color:#242424;letter-spacing:-0.283px;">Website visited</div>
<div class="a" style="left:241.1px;top:731.1px;width:177.9px;height:7.8px;background:#2AA0A4;"></div>
<svg class="a" style="left:423.2px;top:730.9px;" width="4" height="9" viewBox="0 0 4 9"><path d="M2.1 0.1H3.8V9.1H2.2V2.1L0.1 3.1V1.5Z" fill="#111"/></svg>
<div class="t" style="left:427.80px;top:727.72px;font-size:12.5px;line-height:16px;color:#111;-webkit-text-stroke:0.20px #111;">7</div>
<div class="t" style="left:241.30px;top:751.82px;font-size:12.5px;line-height:16px;color:#242424;letter-spacing:-0.342px;">Website clicked</div>
<div class="a" style="left:241.1px;top:773.1px;width:84.9px;height:7.8px;background:#2AA0A4;"></div>
<div class="t" style="left:330.50px;top:769.72px;font-size:12.5px;line-height:16px;color:#111;-webkit-text-stroke:0.20px #111;letter-spacing:-0.2px;">9</div>
<div class="t" style="left:241.30px;top:793.82px;font-size:12.5px;line-height:16px;color:#242424;letter-spacing:-0.368px;">Event checked-in</div>
<div class="a" style="left:241.1px;top:815.1px;width:25.9px;height:7.8px;background:#CA5010;"></div>
<div class="t" style="left:271.50px;top:811.72px;font-size:12.5px;line-height:16px;color:#111;-webkit-text-stroke:0.20px #111;letter-spacing:-0.2px;">3</div>
<div class="t" style="left:613.50px;top:297.17px;font-size:14px;line-height:18px;color:#242424;-webkit-text-stroke:0.45px #242424;letter-spacing:-0.440px;">Email</div>
<svg class="a" style="left:654px;top:299px;" width="12" height="12" viewBox="0 0 12 12"><circle cx="6" cy="6" r="5.5" fill="none" stroke="#424242" stroke-width="0.9"/><path d="M4.3 4.6A1.8 1.8 0 1 1 6.6 6.3C6 6.6 6 7 6 7.8" fill="none" stroke="#424242" stroke-width="0.9"/><circle cx="6" cy="9.2" r=".6" fill="#424242"/></svg>
<div class="t" style="left:613.50px;top:338.23px;font-size:12px;line-height:16px;color:#616161;letter-spacing:-0.187px;">Total opens</div>
<div class="t" style="left:613.50px;top:356.20px;font-size:36px;line-height:47px;color:#2b2b2b;letter-spacing:-1.816px;-webkit-text-stroke:0.55px #2b2b2b;">25</div>
<div class="t" style="left:724.50px;top:338.23px;font-size:12px;line-height:16px;color:#616161;letter-spacing:-0.105px;">Open rate</div>
<div class="t" style="left:724.50px;top:356.20px;font-size:36px;line-height:47px;color:#2b2b2b;letter-spacing:-1.182px;-webkit-text-stroke:0.55px #2b2b2b;">46%</div>
<div class="t" style="left:846.00px;top:338.23px;font-size:12px;line-height:16px;color:#616161;letter-spacing:-0.314px;">Delivery issues</div>
<div class="t" style="left:846.00px;top:356.20px;font-size:36px;line-height:47px;color:#2b2b2b;-webkit-text-stroke:0.55px #2b2b2b;">7</div>
<div class="t" style="left:613.30px;top:427.87px;font-size:14px;line-height:18px;color:#2266E3;letter-spacing:-0.077px;">View email insights</div>
<svg class="a" style="left:741.8px;top:431.7px;" width="13" height="11" viewBox="0 0 13 11"><path d="M0.5 5.5H12M7 0.8L12 5.5L7 10.2" stroke="#2266E3" stroke-width="1.1" fill="none"/></svg>
<div class="t" style="left:1029.00px;top:297.17px;font-size:14px;line-height:18px;color:#242424;-webkit-text-stroke:0.45px #242424;letter-spacing:0.194px;">Push notification</div>
<svg class="a" style="left:1142px;top:299px;" width="12" height="12" viewBox="0 0 12 12"><circle cx="6" cy="6" r="5.5" fill="none" stroke="#424242" stroke-width="0.9"/><path d="M4.3 4.6A1.8 1.8 0 1 1 6.6 6.3C6 6.6 6 7 6 7.8" fill="none" stroke="#424242" stroke-width="0.9"/><circle cx="6" cy="9.2" r=".6" fill="#424242"/></svg>
<div class="t" style="left:1028.60px;top:338.23px;font-size:12px;line-height:16px;color:#616161;letter-spacing:-0.269px;">Opens</div>
<div class="t" style="left:1028.60px;top:356.20px;font-size:36px;line-height:47px;color:#2b2b2b;-webkit-text-stroke:0.55px #2b2b2b;">9</div>
<div class="t" style="left:1113.60px;top:338.23px;font-size:12px;line-height:16px;color:#616161;letter-spacing:-0.105px;">Open rate</div>
<div class="t" style="left:1113.60px;top:356.20px;font-size:36px;line-height:47px;color:#2b2b2b;letter-spacing:-1.182px;-webkit-text-stroke:0.55px #2b2b2b;">56%</div>
<div class="t" style="left:1243.60px;top:338.23px;font-size:12px;line-height:16px;color:#616161;letter-spacing:0.041px;">Not sent</div>
<div class="t" style="left:1243.60px;top:356.20px;font-size:36px;line-height:47px;color:#2b2b2b;-webkit-text-stroke:0.55px #2b2b2b;">8</div>
<div class="t" style="left:1028.80px;top:427.87px;font-size:14px;line-height:18px;color:#2266E3;letter-spacing:0.033px;">View push notification insights</div>
<svg class="a" style="left:1227.5px;top:431.7px;" width="13" height="11" viewBox="0 0 13 11"><path d="M0.5 5.5H12M7 0.8L12 5.5L7 10.2" stroke="#2266E3" stroke-width="1.1" fill="none"/></svg>
<div class="t" style="left:613.50px;top:486.17px;font-size:14px;line-height:18px;color:#242424;-webkit-text-stroke:0.45px #242424;letter-spacing:-0.195px;">Text message</div>
<svg class="a" style="left:704px;top:488px;" width="12" height="12" viewBox="0 0 12 12"><circle cx="6" cy="6" r="5.5" fill="none" stroke="#424242" stroke-width="0.9"/><path d="M4.3 4.6A1.8 1.8 0 1 1 6.6 6.3C6 6.6 6 7 6 7.8" fill="none" stroke="#424242" stroke-width="0.9"/><circle cx="6" cy="9.2" r=".6" fill="#424242"/></svg>
<div class="t" style="left:613.50px;top:527.23px;font-size:12px;line-height:16px;color:#616161;letter-spacing:-0.210px;">Total clicks</div>
<svg class="a" style="left:614.2px;top:555.2px;" width="10" height="26" viewBox="0 0 10 26"><path d="M5.6 0.2H9.7V25.6H5.8V4.9L0.3 7.4V3.3Z" fill="#2b2b2b"/></svg>
<div class="t" style="left:627.40px;top:545.20px;font-size:36px;line-height:47px;color:#2b2b2b;-webkit-text-stroke:0.55px #2b2b2b;">4</div>
<div class="t" style="left:720.00px;top:527.23px;font-size:12px;line-height:16px;color:#616161;letter-spacing:-0.314px;">Delivery issues</div>
<div class="t" style="left:720.00px;top:545.20px;font-size:36px;line-height:47px;color:#2b2b2b;-webkit-text-stroke:0.55px #2b2b2b;">7</div>
<div class="t" style="left:613.30px;top:616.87px;font-size:14px;line-height:18px;color:#2266E3;letter-spacing:-0.137px;">View text message insights</div>
<svg class="a" style="left:789.5px;top:620.7px;" width="13" height="11" viewBox="0 0 13 11"><path d="M0.5 5.5H12M7 0.8L12 5.5L7 10.2" stroke="#2266E3" stroke-width="1.1" fill="none"/></svg>
<div class="t" style="left:1029.00px;top:486.17px;font-size:14px;line-height:18px;color:#242424;-webkit-text-stroke:0.45px #242424;letter-spacing:-0.042px;">Custom channels</div>
<svg class="a" style="left:1143px;top:488px;" width="12" height="12" viewBox="0 0 12 12"><circle cx="6" cy="6" r="5.5" fill="none" stroke="#424242" stroke-width="0.9"/><path d="M4.3 4.6A1.8 1.8 0 1 1 6.6 6.3C6 6.6 6 7 6 7.8" fill="none" stroke="#424242" stroke-width="0.9"/><circle cx="6" cy="9.2" r=".6" fill="#424242"/></svg>
<div class="t" style="left:1028.60px;top:527.23px;font-size:12px;line-height:16px;color:#616161;letter-spacing:-0.210px;">Total clicks</div>
<div class="t" style="left:1028.60px;top:545.20px;font-size:36px;line-height:47px;color:#2b2b2b;-webkit-text-stroke:0.55px #2b2b2b;">0</div>
<div class="t" style="left:1136.00px;top:527.23px;font-size:12px;line-height:16px;color:#616161;letter-spacing:-0.314px;">Delivery issues</div>
<svg class="a" style="left:1139.6px;top:555.2px;" width="10" height="26" viewBox="0 0 10 26"><path d="M5.6 0.2H9.7V25.6H5.8V4.9L0.3 7.4V3.3Z" fill="#2b2b2b"/></svg>
<div class="t" style="left:1028.80px;top:616.87px;font-size:14px;line-height:18px;color:#2266E3;letter-spacing:-0.066px;">View custom channel insights</div>
<svg class="a" style="left:1221.5px;top:620.7px;" width="13" height="11" viewBox="0 0 13 11"><path d="M0.5 5.5H12M7 0.8L12 5.5L7 10.2" stroke="#2266E3" stroke-width="1.1" fill="none"/></svg>
<div class="t" style="left:613.50px;top:674.67px;font-size:14px;line-height:18px;color:#242424;-webkit-text-stroke:0.45px #242424;letter-spacing:0.224px;">Website and form</div>
<div class="t" style="left:613.50px;top:715.73px;font-size:12px;line-height:16px;color:#616161;letter-spacing:-0.031px;">Website visited</div>
<svg class="a" style="left:614.2px;top:743.7px;" width="10" height="26" viewBox="0 0 10 26"><path d="M5.6 0.2H9.7V25.6H5.8V4.9L0.3 7.4V3.3Z" fill="#2b2b2b"/></svg>
<div class="t" style="left:626.20px;top:733.70px;font-size:36px;line-height:47px;color:#2b2b2b;-webkit-text-stroke:0.55px #2b2b2b;">7</div>
<div class="t" style="left:729.00px;top:715.73px;font-size:12px;line-height:16px;color:#616161;letter-spacing:-0.154px;">Form visited</div>
<svg class="a" style="left:730.2px;top:743.7px;" width="10" height="26" viewBox="0 0 10 26"><path d="M5.6 0.2H9.7V25.6H5.8V4.9L0.3 7.4V3.3Z" fill="#2b2b2b"/></svg>
<div class="t" style="left:742.20px;top:733.70px;font-size:36px;line-height:47px;color:#2b2b2b;-webkit-text-stroke:0.55px #2b2b2b;">2</div>
<div class="t" style="left:830.00px;top:715.73px;font-size:12px;line-height:16px;color:#616161;letter-spacing:0.083px;">Form submitted</div>
<div class="t" style="left:830.00px;top:733.70px;font-size:36px;line-height:47px;color:#2b2b2b;-webkit-text-stroke:0.55px #2b2b2b;">4</div>
<div class="t" style="left:613.30px;top:805.37px;font-size:14px;line-height:18px;color:#2266E3;letter-spacing:0.075px;">View website &amp; form insights</div>
<svg class="a" style="left:804.5px;top:809.2px;" width="13" height="11" viewBox="0 0 13 11"><path d="M0.5 5.5H12M7 0.8L12 5.5L7 10.2" stroke="#2266E3" stroke-width="1.1" fill="none"/></svg>
</div></body></html>
